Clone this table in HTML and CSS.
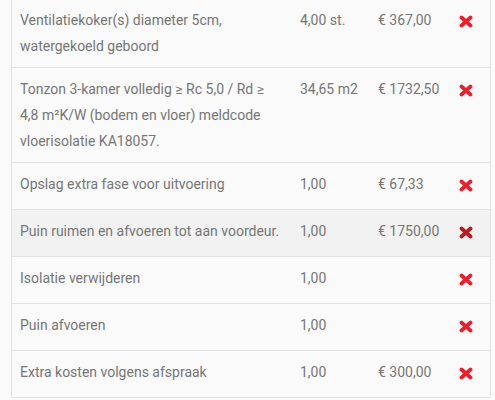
FILE: index.html
```html
<!DOCTYPE html>
<html lang="nl">
<head>
<meta charset="utf-8">
<link rel="stylesheet" href="styles.css">
</head>
<body>
<div class="table">
  <div class="row">
    <div class="cell desc">Ventilatiekoker(s) diameter 5cm, watergekoeld geboord</div>
    <div class="cell">4,00 st.</div>
    <div class="cell">€ 367,00</div>
    <div class="cell act"><svg class="x" viewBox="0 0 14 13"><path d="M2.5 2.5 L11.5 10.5 M11.5 2.5 L2.5 10.5"/></svg></div>
  </div>
  <div class="row">
    <div class="cell desc">Tonzon 3-kamer volledig ≥ Rc 5,0 / Rd ≥ 4,8 m²K/W (bodem en vloer) meldcode vloerisolatie KA18057.</div>
    <div class="cell">34,65 m2</div>
    <div class="cell">€ 1732,50</div>
    <div class="cell act"><svg class="x" viewBox="0 0 14 13"><path d="M2.5 2.5 L11.5 10.5 M11.5 2.5 L2.5 10.5"/></svg></div>
  </div>
  <div class="row">
    <div class="cell desc">Opslag extra fase voor uitvoering</div>
    <div class="cell">1,00</div>
    <div class="cell">€ 67,33</div>
    <div class="cell act"><svg class="x" viewBox="0 0 14 13"><path d="M2.5 2.5 L11.5 10.5 M11.5 2.5 L2.5 10.5"/></svg></div>
  </div>
  <div class="row hover">
    <div class="cell desc">Puin ruimen en afvoeren tot aan voordeur.</div>
    <div class="cell">1,00</div>
    <div class="cell">€ 1750,00</div>
    <div class="cell act"><svg class="x" viewBox="0 0 14 13"><path d="M2.5 2.5 L11.5 10.5 M11.5 2.5 L2.5 10.5"/></svg></div>
  </div>
  <div class="row">
    <div class="cell desc">Isolatie verwijderen</div>
    <div class="cell">1,00</div>
    <div class="cell"></div>
    <div class="cell act"><svg class="x" viewBox="0 0 14 13"><path d="M2.5 2.5 L11.5 10.5 M11.5 2.5 L2.5 10.5"/></svg></div>
  </div>
  <div class="row">
    <div class="cell desc">Puin afvoeren</div>
    <div class="cell">1,00</div>
    <div class="cell"></div>
    <div class="cell act"><svg class="x" viewBox="0 0 14 13"><path d="M2.5 2.5 L11.5 10.5 M11.5 2.5 L2.5 10.5"/></svg></div>
  </div>
  <div class="row">
    <div class="cell desc">Extra kosten volgens afspraak</div>
    <div class="cell">1,00</div>
    <div class="cell">€ 300,00</div>
    <div class="cell act"><svg class="x" viewBox="0 0 14 13"><path d="M2.5 2.5 L11.5 10.5 M11.5 2.5 L2.5 10.5"/></svg></div>
  </div>
</div>
</body>
</html>
```
FILE: styles.css
```css
html, body {
  margin: 0;
  padding: 0;
  background: #fafafa;
}
body {
  font-family: Roboto, "Liberation Sans", sans-serif;
  font-size: 14px;
  color: #767676;
}
.table {
  margin: -2px 0 0 11px;
  width: 480px;
  box-sizing: border-box;
  border-left: 1px solid #e2e2e2;
  border-right: 1px solid #e2e2e2;
  border-top: 1px solid #e2e2e2;
  background: #fafafa;
}
.row {
  display: grid;
  grid-template-columns: 280px 78px 81px 39px;
  border-bottom: 1px solid #e2e2e2;
}
.row.hover {
  background: #f2f2f2;
}
.cell {
  padding: 8px 8px;
  line-height: 26px;
}
.desc {
  padding-right: 8px;
}
.act {
  height: 30px;
  display: flex;
  align-items: center;
  padding-top: 7px;
  padding-bottom: 9px;
}
.x {
  width: 14px;
  height: 13px;
  display: block;
}
.x path {
  stroke: #e8212b;
  stroke-width: 3.8;
  stroke-linecap: round;
  fill: none;
}
.row.hover .x path {
  stroke: #bd1b22;
}
```
